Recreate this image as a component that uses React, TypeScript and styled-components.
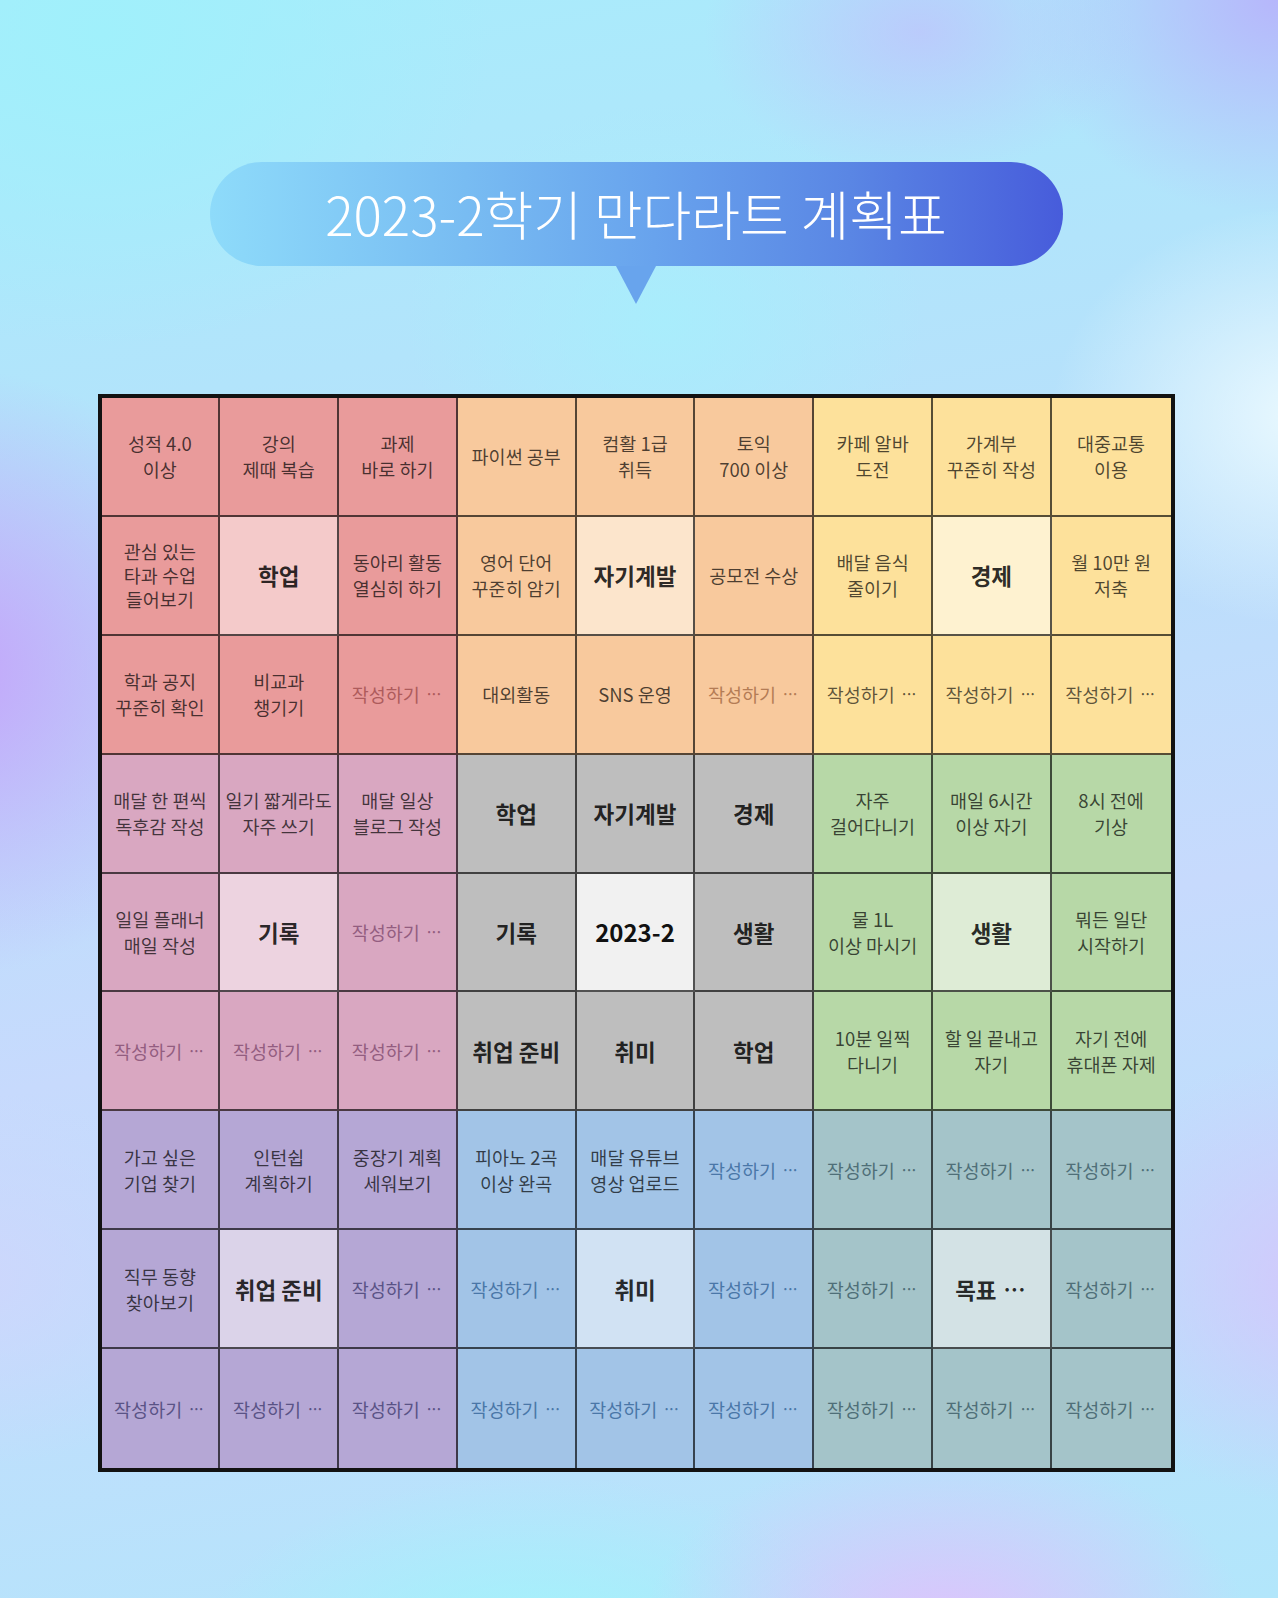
import React from 'react';
import styled, { createGlobalStyle } from 'styled-components';

const Global = createGlobalStyle`
  html, body { margin: 0; padding: 0; }
  body { font-family: "Noto Sans CJK KR", "Noto Sans", sans-serif; }
`;

type Block = { base: string; center: string; ph: string };

const BLOCKS: Block[] = [
  { base: '#E99B9B', center: '#F4CACA', ph: '#AE5B5C' },
  { base: '#F8C99D', center: '#FCE5CC', ph: '#B47C55' },
  { base: '#FDE19B', center: '#FEF2D0', ph: 'rgba(0,0,0,0.64)' },
  { base: '#D9A7C1', center: '#EDD3E0', ph: '#935D80' },
  { base: '#BEBEBE', center: '#F1F1F1', ph: 'rgba(0,0,0,0.6)' },
  { base: '#B7D8A7', center: '#DEECD6', ph: 'rgba(0,0,0,0.6)' },
  { base: '#B5A7D5', center: '#DBD3E9', ph: '#5A5386' },
  { base: '#A2C4E7', center: '#D1E2F3', ph: '#4A77A8' },
  { base: '#A4C4C9', center: '#D3E2E5', ph: '#4F6F78' },
];

const PH = '~';
const ROWS: string[][] = [
  ['성적 4.0\n이상', '강의\n제때 복습', '과제\n바로 하기', '파이썬 공부', '컴활 1급\n취득', '토익\n700 이상', '카페 알바\n도전', '가계부\n꾸준히 작성', '대중교통\n이용'],
  ['관심 있는\n타과 수업\n들어보기', '#학업', '동아리 활동\n열심히 하기', '영어 단어\n꾸준히 암기', '#자기계발', '공모전 수상', '배달 음식\n줄이기', '#경제', '월 10만 원\n저축'],
  ['학과 공지\n꾸준히 확인', '비교과\n챙기기', PH, '대외활동', 'SNS 운영', PH, PH, PH, PH],
  ['매달 한 편씩\n독후감 작성', '일기 짧게라도\n자주 쓰기', '매달 일상\n블로그 작성', '#학업', '#자기계발', '#경제', '자주\n걸어다니기', '매일 6시간\n이상 자기', '8시 전에\n기상'],
  ['일일 플래너\n매일 작성', '#기록', PH, '#기록', '@2023-2', '#생활', '물 1L\n이상 마시기', '#생활', '뭐든 일단\n시작하기'],
  [PH, PH, PH, '#취업 준비', '#취미', '#학업', '10분 일찍\n다니기', '할 일 끝내고\n자기', '자기 전에\n휴대폰 자제'],
  ['가고 싶은\n기업 찾기', '인턴쉽\n계획하기', '중장기 계획\n세워보기', '피아노 2곡\n이상 완곡', '매달 유튜브\n영상 업로드', PH, PH, PH, PH],
  ['직무 동향\n찾아보기', '#취업 준비', PH, PH, '#취미', PH, PH, '*목표', PH],
  [PH, PH, PH, PH, PH, PH, PH, PH, PH],
];

const Page = styled.div`
  width: 1278px;
  height: 1598px;
  box-sizing: border-box;
  padding: 162px 6px 0 0;
  display: flex;
  flex-direction: column;
  align-items: center;
  overflow: hidden;
  background:
    radial-gradient(ellipse 440px 420px at -4% 42%, rgba(196, 164, 250, 1), rgba(196, 164, 250, 0) 72%),
    radial-gradient(ellipse 300px 200px at 72% 2%, rgba(190, 196, 252, 0.8), rgba(190, 196, 252, 0) 72%),
    radial-gradient(ellipse 360px 300px at 100% 0%, rgba(183, 180, 251, 0.95), rgba(183, 180, 251, 0) 72%),
    radial-gradient(ellipse 360px 300px at 102% 26%, rgba(236, 250, 255, 0.95), rgba(236, 250, 255, 0) 70%),
    radial-gradient(ellipse 420px 260px at 74% 102%, rgba(224, 192, 252, 0.95), rgba(224, 192, 252, 0) 72%),
    radial-gradient(ellipse 360px 320px at 104% 80%, rgba(214, 196, 252, 0.9), rgba(214, 196, 252, 0) 72%),
    radial-gradient(ellipse 360px 260px at -2% 80%, rgba(206, 214, 252, 0.9), rgba(206, 214, 252, 0) 72%),
    radial-gradient(ellipse 480px 260px at 42% 104%, rgba(160, 244, 251, 1), rgba(160, 244, 251, 0) 72%),
    radial-gradient(ellipse 520px 420px at 8% 2%, rgba(160, 240, 251, 1), rgba(160, 240, 251, 0) 75%),
    radial-gradient(ellipse 360px 300px at 52% 20%, rgba(168, 238, 252, 0.9), rgba(168, 238, 252, 0) 72%),
    linear-gradient(170deg, #a8ecfb 0%, #b7e0fb 35%, #c7dafd 60%, #b2e6fb 100%);
`;

const Bubble = styled.div`
  position: relative;
  width: 853px;
  height: 104px;
  border-radius: 52px;
  background: linear-gradient(90deg, #8edbfa 0%, #78bcf2 30%, #68a3ed 52%, #5a86e4 75%, #475cdb 100%);
  display: flex;
  align-items: center;
  justify-content: center;

  &::after {
    content: '';
    position: absolute;
    left: 50%;
    top: 100%;
    transform: translateX(-50%);
    border-left: 20px solid transparent;
    border-right: 20px solid transparent;
    border-top: 38px solid #68a4ed;
  }
`;

const Title = styled.h1`
  margin: 0;
  color: #ffffff;
  font-family: "Noto Sans CJK KR", "Noto Sans", sans-serif;
  font-size: 53px;
  font-weight: 300;
  letter-spacing: 0;
  line-height: 1;
  padding-bottom: 2px;
`;

const Board = styled.div`
  margin-top: 128px;
  width: 1077px;
  height: 1078px;
  box-sizing: border-box;
  border: 4px solid #121212;
  display: grid;
  grid-template-columns: repeat(9, 1fr);
  grid-template-rows: repeat(9, 1fr);
`;

type Kind = 'text' | 'ph' | 'label' | 'hub';

const Cell = styled.div<{ $bg: string; $color: string; $kind: Kind; $dense: boolean; $right: boolean; $bottom: boolean }>`
  background: ${(p) => p.$bg};
  color: ${(p) => p.$color};
  border-right: ${(p) => (p.$right ? '2px solid rgba(0,0,0,0.66)' : 'none')};
  border-bottom: ${(p) => (p.$bottom ? '2px solid rgba(0,0,0,0.66)' : 'none')};
  display: flex;
  align-items: center;
  justify-content: center;
  text-align: center;
  white-space: pre-line;
  font-family: "Noto Sans CJK KR", "Noto Sans", sans-serif;
  font-size: ${(p) => (p.$kind === 'hub' ? '24px' : p.$kind === 'label' ? '22.5px' : '18.5px')};
  font-weight: ${(p) => (p.$kind === 'hub' || p.$kind === 'label' ? 700 : 400)};
  line-height: ${(p) => (p.$dense ? '24px' : '26px')};
  overflow: hidden;
  min-width: 0;
  min-height: 0;
`;

const Dots = styled.span`
  font-size: 0.85em;
  letter-spacing: -4px;
  margin-left: 5px;
  margin-right: 4px;
`;

export default function App() {
  return (
    <>
      <Global />
      <Page>
        <Bubble>
          <Title>2023-2학기 만다라트 계획표</Title>
        </Bubble>
        <Board>
          {ROWS.map((row, r) =>
            row.map((raw, c) => {
              const block = BLOCKS[Math.floor(r / 3) * 3 + Math.floor(c / 3)];
              const isCenter = r % 3 === 1 && c % 3 === 1;
              const bg = isCenter ? block.center : block.base;
              let kind: Kind = 'text';
              let text = raw;
              let dots = false;
              if (raw === PH) {
                kind = 'ph';
                text = '작성하기';
                dots = true;
              } else if (raw.startsWith('#')) {
                kind = 'label';
                text = raw.slice(1);
              } else if (raw.startsWith('*')) {
                kind = 'label';
                text = raw.slice(1);
                dots = true;
              } else if (raw.startsWith('@')) {
                kind = 'hub';
                text = raw.slice(1);
              }
              const color =
                kind === 'ph' ? block.ph : kind === 'text' ? 'rgba(0,0,0,0.7)' : kind === 'hub' ? '#111' : 'rgba(0,0,0,0.84)';
              return (
                <Cell
                  key={`${r}-${c}`}
                  $bg={bg}
                  $color={color}
                  $kind={kind}
                  $dense={text.split('\n').length >= 3}
                  $right={c < 8}
                  $bottom={r < 8}
                >
                  {text}
                  {dots && <Dots>···</Dots>}
                </Cell>
              );
            })
          )}
        </Board>
      </Page>
    </>
  );
}
